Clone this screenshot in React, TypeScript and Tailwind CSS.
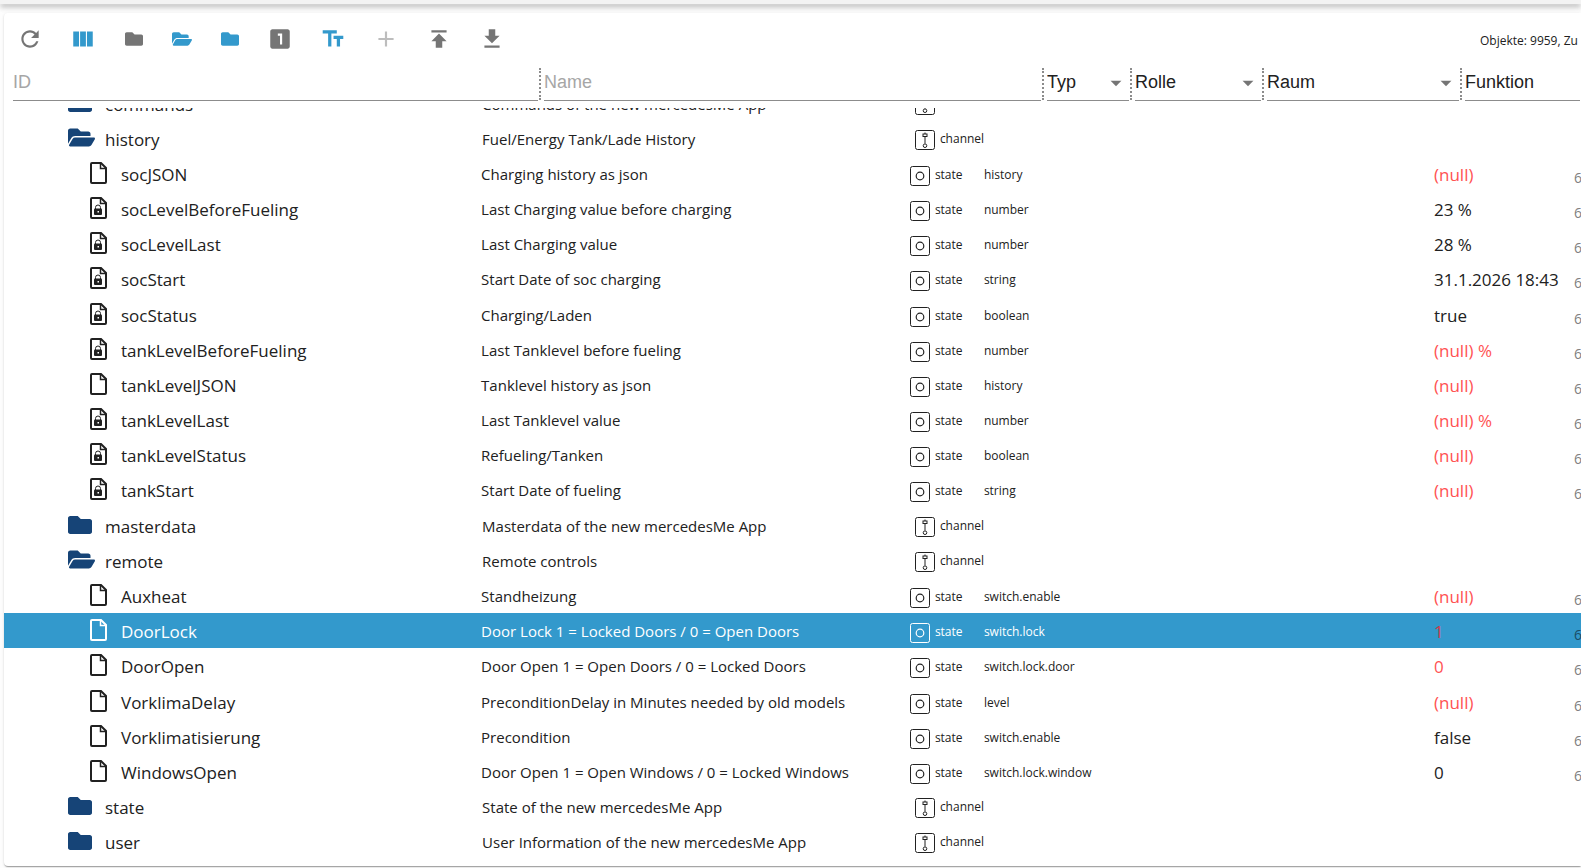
import { FaFolder, FaFolderOpen } from 'react-icons/fa';

interface ObjectRow {
  id: string;
  name: string;
  kind: 'channel' | 'state';
  open?: boolean;
  locked?: boolean;
  selected?: boolean;
  role?: string;
  value?: string;
  unack?: boolean;
}

const rows: ObjectRow[] = [
  { id: 'commands', name: 'Commands of the new mercedesMe App', kind: 'channel' },
  { id: 'history', name: 'Fuel/Energy Tank/Lade History', kind: 'channel', open: true },
  { id: 'socJSON', name: 'Charging history as json', kind: 'state', role: 'history', value: '(null)', unack: true },
  { id: 'socLevelBeforeFueling', name: 'Last Charging value before charging', kind: 'state', locked: true, role: 'number', value: '23 %' },
  { id: 'socLevelLast', name: 'Last Charging value', kind: 'state', locked: true, role: 'number', value: '28 %' },
  { id: 'socStart', name: 'Start Date of soc charging', kind: 'state', locked: true, role: 'string', value: '31.1.2026 18:43' },
  { id: 'socStatus', name: 'Charging/Laden', kind: 'state', locked: true, role: 'boolean', value: 'true' },
  { id: 'tankLevelBeforeFueling', name: 'Last Tanklevel before fueling', kind: 'state', locked: true, role: 'number', value: '(null) %', unack: true },
  { id: 'tankLevelJSON', name: 'Tanklevel history as json', kind: 'state', role: 'history', value: '(null)', unack: true },
  { id: 'tankLevelLast', name: 'Last Tanklevel value', kind: 'state', locked: true, role: 'number', value: '(null) %', unack: true },
  { id: 'tankLevelStatus', name: 'Refueling/Tanken', kind: 'state', locked: true, role: 'boolean', value: '(null)', unack: true },
  { id: 'tankStart', name: 'Start Date of fueling', kind: 'state', locked: true, role: 'string', value: '(null)', unack: true },
  { id: 'masterdata', name: 'Masterdata of the new mercedesMe App', kind: 'channel' },
  { id: 'remote', name: 'Remote controls', kind: 'channel', open: true },
  { id: 'Auxheat', name: 'Standheizung', kind: 'state', role: 'switch.enable', value: '(null)', unack: true },
  { id: 'DoorLock', name: 'Door Lock 1 = Locked Doors / 0 = Open Doors', kind: 'state', selected: true, role: 'switch.lock', value: '1', unack: true },
  { id: 'DoorOpen', name: 'Door Open 1 = Open Doors / 0 = Locked Doors', kind: 'state', role: 'switch.lock.door', value: '0', unack: true },
  { id: 'VorklimaDelay', name: 'PreconditionDelay in Minutes needed by old models', kind: 'state', role: 'level', value: '(null)', unack: true },
  { id: 'Vorklimatisierung', name: 'Precondition', kind: 'state', role: 'switch.enable', value: 'false' },
  { id: 'WindowsOpen', name: 'Door Open 1 = Open Windows / 0 = Locked Windows', kind: 'state', role: 'switch.lock.window', value: '0' },
  { id: 'state', name: 'State of the new mercedesMe App', kind: 'channel' },
  { id: 'user', name: 'User Information of the new mercedesMe App', kind: 'channel' },
];

const Glyph = ({ d }: { d: string }) => (
  <svg viewBox="0 0 24 24" width={26} height={26} fill="currentColor" aria-hidden="true">
    <path d={d} />
  </svg>
);

const tools = [
  {
    label: 'Aktualisieren',
    className: 'w-[52px] text-[#757575]',
    icon: <Glyph d="M17.65 6.35C16.2 4.9 14.21 4 12 4c-4.42 0-7.99 3.58-7.99 8s3.57 8 7.99 8c3.73 0 6.84-2.55 7.73-6h-2.08c-.82 2.33-3.04 4-5.65 4-3.31 0-6-2.69-6-6s2.69-6 6-6c1.66 0 3.14.69 4.22 1.78L13 11h7V4l-2.35 2.35z" />,
  },
  {
    label: 'Spalten',
    className: 'w-[52px] text-[#3399cc]',
    icon: <Glyph d="M14.67 5v14H9.33V5h5.34zm1 14H21V5h-5.33v14zm-7.34 0V5H3v14h5.33z" />,
  },
  { label: 'Alle zuklappen', className: 'w-[47px] text-[#757575]', icon: <FaFolder size={18} /> },
  { label: 'Alle aufklappen', className: 'w-[47px] text-[#3399cc]', icon: <FaFolderOpen size={20} /> },
  { label: 'Eine Ebene zuklappen', className: 'w-[47px] text-[#3399cc]', icon: <FaFolder size={18} /> },
  {
    label: 'Eine Ebene aufklappen',
    className: 'w-[52px] text-[#757575]',
    icon: <Glyph d="M19 3H5c-1.1 0-2 .9-2 2v14c0 1.1.9 2 2 2h14c1.1 0 2-.9 2-2V5c0-1.1-.9-2-2-2zm-5 14h-2V9h-2V7h4v10z" />,
  },
  {
    label: 'Namen anzeigen',
    className: 'w-[52px] text-[#3399cc]',
    icon: <Glyph d="M2.5 4v3h5v12h3V7h5V4h-13zm19 5h-9v3h3v7h3v-7h3V9z" />,
  },
  {
    label: 'Objekt anlegen',
    className: 'w-[52px] text-[#bdbdbd]',
    icon: <Glyph d="M19 13h-6v6h-2v-6H5v-2h6V5h2v6h6v2z" />,
  },
  {
    label: 'Importieren',
    className: 'w-[52px] text-[#757575]',
    icon: <Glyph d="M5 4v2h14V4H5zm0 10h4v6h6v-6h4l-7-7-7 7z" />,
  },
  {
    label: 'Exportieren',
    className: 'w-[52px] text-[#757575]',
    icon: <Glyph d="M19 9h-4V3H9v6H5l7 7 7-7zM5 18v2h14v-2H5z" />,
  },
];

const FileIcon = ({ locked }: { locked?: boolean }) => (
  <svg width={17} height={22} viewBox="0 0 17 22" fill="none" stroke="currentColor" aria-hidden="true">
    <path d="M2 1h9l5 5v14a1 1 0 0 1-1 1H2a1 1 0 0 1-1-1V2a1 1 0 0 1 1-1z" strokeWidth={2} />
    <path d="M10.5 1.5v5h5" strokeWidth={1.5} />
    {locked && (
      <>
        <rect x={4} y={11.5} width={8} height={6.5} rx={1} fill="currentColor" stroke="none" />
        <path d="M5.500 12v-1.500a2.500 2.500 0 0 1 5 0V12" strokeWidth={1} />
        <rect x={7.5} y={14} width={1.5} height={1.5} fill="#fff" stroke="none" />
      </>
    )}
  </svg>
);

const ChannelIcon = () => (
  <svg className="shrink-0" width={20} height={20} viewBox="0 0 20 20" fill="none" stroke="currentColor" aria-hidden="true">
    <rect x={0.5} y={0.5} width={19} height={19} rx={2} />
    <rect x={8} y={4} width={4} height={2.5} />
    <path d="M10 2.500V4M10 6.500v7" />
    <circle cx={10} cy={15.700} r={1.800} />
  </svg>
);

const StateIcon = () => (
  <svg className="shrink-0" width={20} height={20} viewBox="0 0 20 20" fill="none" stroke="currentColor" aria-hidden="true">
    <rect x={0.5} y={0.5} width={19} height={19} rx={2} />
    <circle cx={10} cy={10} r={3.800} strokeWidth={1.200} />
  </svg>
);

const FilterCell = ({ children, last }: { children: React.ReactNode; last?: boolean }) => (
  <div className={last ? 'flex min-w-0' : 'flex min-w-0 pr-[3px]'}>
    <div className="relative mr-px h-full min-w-0 flex-1 border-b border-[#8c8c8c]">{children}</div>
    {!last && <div className="mb-px mt-[3px] border-r-2 border-dotted border-[#8c8c8c]" />}
  </div>
);

const FilterInput = ({ label }: { label: string }) => (
  <FilterCell>
    <input
      aria-label={label}
      placeholder={label}
      className="h-full w-full bg-transparent text-lg leading-6 text-[#212121] outline-none placeholder:text-[#a6a6a6]"
    />
  </FilterCell>
);

const FilterSelect = ({ label, last }: { label: string; last?: boolean }) => (
  <FilterCell last={last}>
    <select
      aria-label={label}
      className="h-full w-full appearance-none bg-transparent pb-0.5 text-lg leading-6 text-[#212121] outline-none"
    >
      <option>{label}</option>
    </select>
    {!last && (
      <svg
        viewBox="0 0 24 24"
        className="pointer-events-none absolute right-0 top-[5px] h-[26px] w-[26px] text-[#757575]"
        fill="currentColor"
        aria-hidden="true"
      >
        <path d="M7 10l5 5 5-5z" />
      </svg>
    )}
  </FilterCell>
);

const Row = ({ row }: { row: ObjectRow }) => {
  const isState = row.kind === 'state';
  return (
    <tr className={row.selected ? 'h-[35px] bg-[#3399cc] text-white' : 'h-[35px]'}>
      <td className={isState ? 'pl-[86px]' : 'pl-16'}>
        <div className="flex items-center text-[17px] leading-6">
          {isState ? (
            <span className="w-[31px] shrink-0">
              <FileIcon locked={row.locked} />
            </span>
          ) : (
            <span className="w-[37px] shrink-0 text-[#164477]">
              {row.open ? <FaFolderOpen size={27} /> : <FaFolder size={24} />}
            </span>
          )}
          <span className="pt-1">{row.id}</span>
        </div>
      </td>
      <td className={`pt-0.5 text-[15px] leading-5 ${isState ? 'pl-1' : 'pl-[5px]'}`}>{row.name}</td>
      <td className={isState ? 'pl-[7px]' : 'pl-3'}>
        <div className={`flex items-start gap-[5px] text-xs leading-[18px] ${isState ? 'pt-1.5' : 'pt-1'}`}>
          {isState ? <StateIcon /> : <ChannelIcon />}
          <span>{row.kind}</span>
        </div>
      </td>
      <td className="pl-1 pt-1 text-xs leading-[18px]">{row.role}</td>
      <td
        className={`pl-1 pt-1 text-[17px] leading-6 ${row.selected ? 'text-[#d13c4b]' : row.unack ? 'text-[#ff5252]' : ''}`}
      >
        {row.value}
      </td>
      <td className={`pl-1 pt-2.5 text-sm leading-5 ${row.selected ? 'text-[#1a4d66]' : 'text-[#808080]'}`}>
        {isState && '6'}
      </td>
    </tr>
  );
};

export default function App() {
  return (
    <div className="flex h-screen flex-col overflow-hidden bg-[#fdfdfd] font-['Open_Sans',sans-serif] text-[#212121]">
      <header className="h-1 shrink-0 bg-[#f3f3f3] shadow-[0_2px_4px_-1px_rgba(0,0,0,0.2),0_4px_5px_0_rgba(0,0,0,0.14),0_1px_10px_0_rgba(0,0,0,0.12)]" />
      <main className="mb-0.5 ml-1 mt-[9px] flex min-h-0 flex-1 flex-col rounded-l bg-white shadow-[0_2px_1px_-1px_rgba(0,0,0,0.2),0_1px_1px_0_rgba(0,0,0,0.14),0_1px_3px_0_rgba(0,0,0,0.12)]">
        {/* Toolbar */}
        <div className="flex h-[52px] shrink-0 items-center gap-px">
          {tools.map((tool) => (
            <button
              key={tool.label}
              type="button"
              aria-label={tool.label}
              className={`flex h-full shrink-0 items-center justify-center ${tool.className}`}
            >
              {tool.icon}
            </button>
          ))}
          <div className="ml-auto w-[101px] whitespace-nowrap pt-1 text-xs">Objekte: 9959, Zu</div>
        </div>

        {/* Column filters */}
        <div className="ml-[9px] grid h-9 shrink-0 grid-cols-[531fr_503fr_88px_132px_198px_116px] font-['Liberation_Sans',sans-serif]">
          <FilterInput label="ID" />
          <FilterInput label="Name" />
          <FilterSelect label="Typ" />
          <FilterSelect label="Rolle" />
          <FilterSelect label="Raum" />
          <FilterSelect label="Funktion" last />
        </div>

        {/* Object tree, scrolled slightly past its first row */}
        <div className="mt-[7px] min-h-0 flex-1 overflow-hidden">
          <table className="-mt-[23px] h-[774px] w-full table-fixed whitespace-nowrap">
            <colgroup>
              <col className="w-[30%]" />
              <col className="w-[27%]" />
              <col className="w-[77px]" />
              <col />
              <col className="w-[140px]" />
              <col className="w-[11px]" />
            </colgroup>
            <tbody>
              {rows.map((row) => (
                <Row key={row.id} row={row} />
              ))}
            </tbody>
          </table>
        </div>
      </main>
    </div>
  );
}
